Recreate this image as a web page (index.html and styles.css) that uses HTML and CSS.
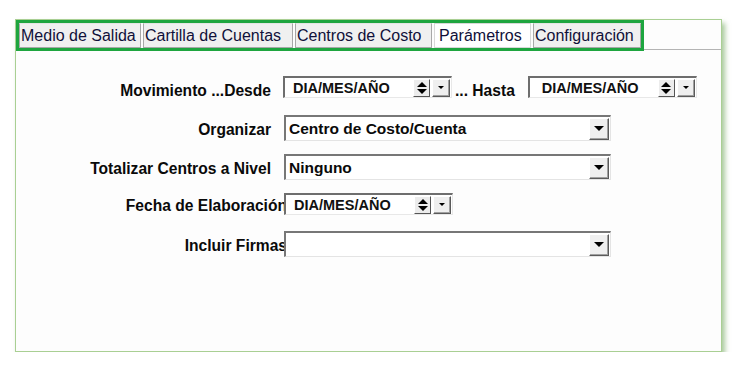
FILE: index.html
```html
<!DOCTYPE html>
<html lang="es">
<head>
<meta charset="utf-8">
<title>Parámetros</title>
<link rel="stylesheet" href="styles.css">
</head>
<body>
<div class="frame">
  <div class="tabstrip">
    <div class="tabs">
      <div class="tab t1">Medio de Salida</div>
      <div class="tab t2">Cartilla de Cuentas</div>
      <div class="tab t3">Centros de Costo</div>
      <div class="tab t4 active">Parámetros</div>
      <div class="tab t5">Configuración</div>
    </div>
  </div>
  <div class="form">
    <div class="row row1">
      <div class="label">Movimiento ...Desde</div>
      <div class="date">
        <span class="date-text">DIA/MES/AÑO</span>
        <span class="spin"><span class="up"></span><span class="down"></span></span>
        <span class="drop small"><span class="arrow"></span></span>
      </div>
      <div class="hasta">... Hasta</div>
      <div class="date date-hasta">
        <span class="date-text">DIA/MES/AÑO</span>
        <span class="spin"><span class="up"></span><span class="down"></span></span>
        <span class="drop small"><span class="arrow"></span></span>
      </div>
    </div>
    <div class="row row2">
      <div class="label">Organizar</div>
      <div class="select">
        <span class="select-text">Centro de Costo/Cuenta</span>
        <span class="drop big"><span class="arrow"></span></span>
      </div>
    </div>
    <div class="row row3">
      <div class="label">Totalizar Centros a Nivel</div>
      <div class="select">
        <span class="select-text">Ninguno</span>
        <span class="drop big"><span class="arrow"></span></span>
      </div>
    </div>
    <div class="row row4">
      <div class="label label-over">Fecha de Elaboración</div>
      <div class="date">
        <span class="date-text">DIA/MES/AÑO</span>
        <span class="spin"><span class="up"></span><span class="down"></span></span>
        <span class="drop small"><span class="arrow"></span></span>
      </div>
    </div>
    <div class="row row5">
      <div class="label label-over">Incluir Firmas</div>
      <div class="select">
        <span class="select-text"></span>
        <span class="drop big"><span class="arrow"></span></span>
      </div>
    </div>
  </div>
</div>
</body>
</html>
```
FILE: styles.css
```css
* { box-sizing: border-box; }
html, body { margin: 0; padding: 0; background: #ffffff; }
body {
  padding: 19px 0 0 15px;
  font-family: "Liberation Sans", Arial, sans-serif;
  color: #000;
}
.frame {
  width: 707px;
  height: 333px;
  border: 1px solid #a9cf93;
  background: #fdfdfd;
  box-shadow: 3px 4px 5px rgba(110, 165, 90, 0.6);
}
.tabstrip {
  height: 30px;
  border-bottom: 1px solid #b4b4b4;
  display: flex;
}
.tabs {
  display: flex;
  gap: 2px;
  border: 3px solid #1ea53f;
  height: 31px;
  width: 628px;
}
.tab {
  height: 25px;
  background: #f0f0f0;
  border: 1px solid #a8a8a8;
  border-top-color: #e4e4e4;
  font-size: 16px;
  line-height: 23px;
  color: #10103a;
  padding-left: 1px;
  white-space: nowrap;
}
.tab.active { background: #ffffff; border-color: #d8d8d8; }
.t1 { width: 122px; }
.t2 { width: 150px; }
.t3 { width: 137px; }
.t4 { width: 97px; padding-left: 4px; }
.t5 { width: 108px; }

.form {
  padding-top: 26px;
  display: flex;
  flex-direction: column;
}
.row {
  display: flex;
  align-items: center;
}
.row1 { height: 22px; margin-bottom: 17px; }
.row2 { height: 26px; margin-bottom: 13px; }
.row3 { height: 26px; margin-bottom: 13px; }
.row4 { height: 22px; margin-bottom: 16px; }
.row5 { height: 26px; }

.label {
  width: 255px;
  margin-right: 13px;
  margin-top: 3px;
  text-align: right;
  font-weight: bold;
  font-size: 15.6px;
  white-space: nowrap;
  color: #0a0a0a;
}
.row1 .label { margin-top: 8px; margin-right: 12px; }
.label-over { width: 271px; margin-right: -3px; }

.date {
  width: 169px;
  height: 22px;
  border-top: 2px solid #6e6e6e;
  border-left: 2px solid #6e6e6e;
  border-bottom: 1px solid #e8e8e8;
  border-right: 1px solid #e8e8e8;
  background: #fff;
  display: flex;
  align-items: center;
}
.date-text {
  flex: 1;
  padding-left: 8px;
  font-weight: bold;
  font-size: 14.5px;
  color: #111;
  white-space: nowrap;
}
.date-hasta .date-text { padding-left: 12px; }
.spin {
  width: 17px;
  height: 18px;
  background: #ececec;
  border-top: 1px solid #fff;
  border-left: 1px solid #fff;
  border-right: 1px solid #555;
  border-bottom: 1px solid #555;
  display: flex;
  flex-direction: column;
  align-items: center;
  justify-content: center;
  gap: 2px;
  margin-right: 2px;
}
.up {
  width: 0; height: 0;
  border-left: 5px solid transparent;
  border-right: 5px solid transparent;
  border-bottom: 5px solid #000;
}
.down {
  width: 0; height: 0;
  border-left: 5px solid transparent;
  border-right: 5px solid transparent;
  border-top: 5px solid #000;
}
.drop {
  display: flex;
  align-items: center;
  justify-content: center;
  background: #efefef;
  border-top: 1px solid #fff;
  border-left: 1px solid #fff;
  border-right: 1px solid #5a5a5a;
  border-bottom: 1px solid #5a5a5a;
  box-shadow: inset -1px -1px 0 #a0a0a0;
}
.drop.small { width: 18px; height: 18px; margin-right: 1px; }
.drop.small .arrow {
  border-left: 3px solid transparent;
  border-right: 3px solid transparent;
  border-top: 3px solid #000;
}
.drop.big { width: 20px; height: 22px; margin-right: 1px; }
.drop.big .arrow {
  border-left: 5px solid transparent;
  border-right: 5px solid transparent;
  border-top: 5px solid #000;
}
.arrow { width: 0; height: 0; }

.hasta {
  font-weight: bold;
  font-size: 15.6px;
  margin: 7px 13px 0 3px;
  white-space: nowrap;
  color: #0a0a0a;
}
.select {
  width: 327px;
  height: 26px;
  border-top: 2px solid #777;
  border-left: 2px solid #777;
  border-bottom: 1px solid #e4e4e4;
  border-right: 1px solid #e4e4e4;
  background: #fff;
  display: flex;
  align-items: center;
}
.select-text {
  flex: 1;
  padding-left: 3px;
  font-weight: bold;
  font-size: 15.5px;
  color: #0a0a0a;
  white-space: nowrap;
}
```
